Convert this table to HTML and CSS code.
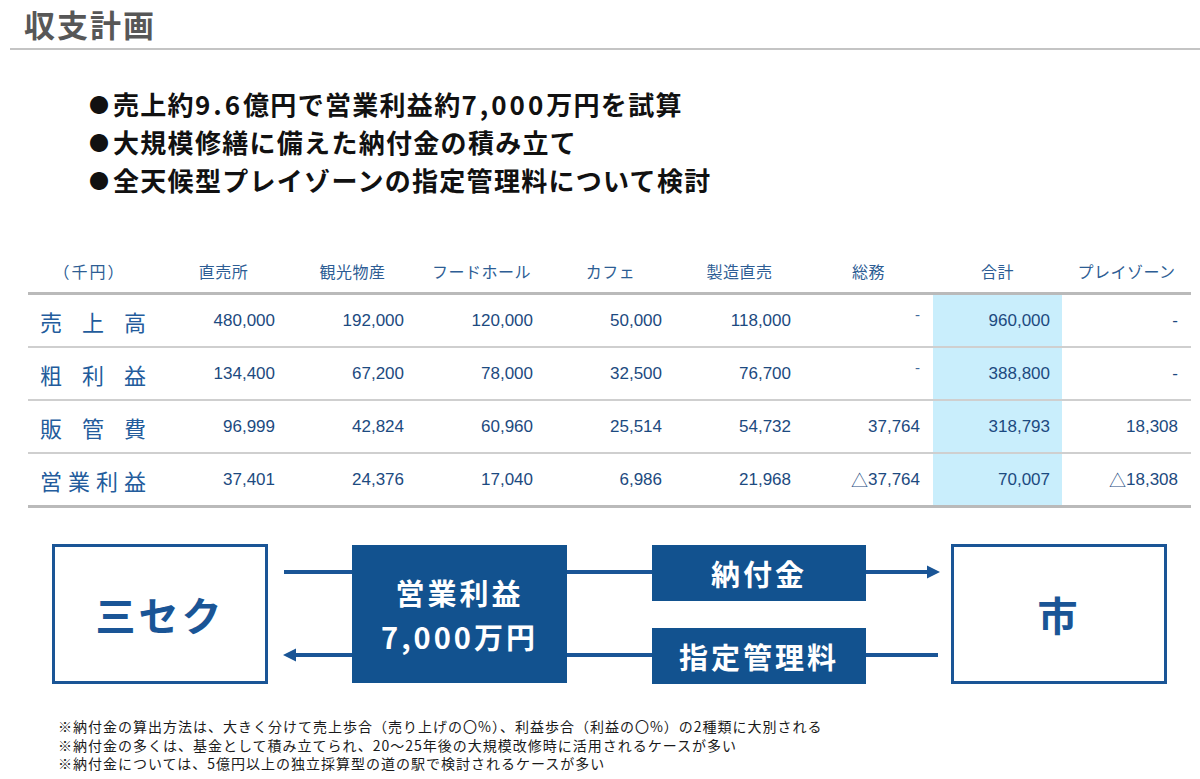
FILE: index.html
```html
<!DOCTYPE html>
<html lang="ja">
<head>
<meta charset="utf-8">
<title>収支計画</title>
<link rel="stylesheet" href="styles.css">
</head>
<body>
<header class="page-head">
  <h1 class="title">収支計画</h1>
</header>

<ul class="points">
  <li><span class="dot">●</span>売上約<span class="num">9.6</span>億円で営業利益約<span class="num">7,000</span>万円を試算</li>
  <li><span class="dot">●</span>大規模修繕に備えた納付金の積み立て</li>
  <li><span class="dot">●</span>全天候型プレイゾーンの指定管理料について検討</li>
</ul>

<div class="fin-table">
  <div class="thead">
    <div class="th th-unit">（千円）</div>
    <div class="th">直売所</div>
    <div class="th">観光物産</div>
    <div class="th">フードホール</div>
    <div class="th">カフェ</div>
    <div class="th">製造直売</div>
    <div class="th">総務</div>
    <div class="th">合計</div>
    <div class="th">プレイゾーン</div>
  </div>

  <div class="tr">
    <div class="td-label"><span class="label"><span>売</span><span>上</span><span>高</span></span></div>
    <div class="td">480,000</div>
    <div class="td">192,000</div>
    <div class="td">120,000</div>
    <div class="td">50,000</div>
    <div class="td">118,000</div>
    <div class="td"><span class="dash-hi">-</span></div>
    <div class="td total">960,000</div>
    <div class="td">-</div>
  </div>

  <div class="tr">
    <div class="td-label"><span class="label"><span>粗</span><span>利</span><span>益</span></span></div>
    <div class="td">134,400</div>
    <div class="td">67,200</div>
    <div class="td">78,000</div>
    <div class="td">32,500</div>
    <div class="td">76,700</div>
    <div class="td"><span class="dash-hi">-</span></div>
    <div class="td total">388,800</div>
    <div class="td">-</div>
  </div>

  <div class="tr">
    <div class="td-label"><span class="label"><span>販</span><span>管</span><span>費</span></span></div>
    <div class="td">96,999</div>
    <div class="td">42,824</div>
    <div class="td">60,960</div>
    <div class="td">25,514</div>
    <div class="td">54,732</div>
    <div class="td">37,764</div>
    <div class="td total">318,793</div>
    <div class="td">18,308</div>
  </div>

  <div class="tr tr-last">
    <div class="td-label"><span class="label"><span>営</span><span>業</span><span>利</span><span>益</span></span></div>
    <div class="td">37,401</div>
    <div class="td">24,376</div>
    <div class="td">17,040</div>
    <div class="td">6,986</div>
    <div class="td">21,968</div>
    <div class="td"><span class="tri">△</span>37,764</div>
    <div class="td total">70,007</div>
    <div class="td"><span class="tri">△</span>18,308</div>
  </div>
</div>

<div class="flow">
  <div class="party">三セク</div>

  <svg class="conn conn-a" width="84" height="140" viewBox="0 0 84 140">
    <line x1="16" y1="28" x2="84" y2="28" />
    <line x1="26" y1="111" x2="84" y2="111" />
    <polygon points="15,111 28,104.5 28,117.5" />
  </svg>

  <div class="profit">
    <span>営業利益</span>
    <span>7,000万円</span>
  </div>

  <svg class="conn conn-b" width="85" height="140" viewBox="0 0 85 140">
    <line x1="0" y1="28" x2="85" y2="28" />
    <line x1="0" y1="111" x2="85" y2="111" />
  </svg>

  <div class="labels">
    <div class="tag">納付金</div>
    <div class="tag">指定管理料</div>
  </div>

  <svg class="conn conn-c" width="85" height="140" viewBox="0 0 85 140">
    <line x1="0" y1="28" x2="63" y2="28" />
    <polygon points="74,28 61,21.5 61,34.5" />
    <line x1="0" y1="111" x2="72" y2="111" />
  </svg>

  <div class="party">市</div>
</div>

<div class="notes">
  <p>※納付金の算出方法は、大きく分けて売上歩合（売り上げの〇%）、利益歩合（利益の〇%）の2種類に大別される</p>
  <p>※納付金の多くは、基金として積み立てられ、20～25年後の大規模改修時に活用されるケースが多い</p>
  <p>※納付金については、5億円以上の独立採算型の道の駅で検討されるケースが多い</p>
</div>
</body>
</html>
```

FILE: styles.css
```css
* {
  box-sizing: border-box;
}

html, body {
  margin: 0;
  padding: 0;
  background: #ffffff;
}

body {
  width: 1200px;
  height: 779px;
  overflow: hidden;
  font-family: "Noto Sans CJK JP", "Noto Sans", sans-serif;
  color: #111111;
}

/* ---------- header ---------- */
.page-head {
  margin-left: 10px;
  height: 50px;
  border-bottom: 2px solid #c4c4c4;
  padding-left: 14px;
}

.title {
  margin: 0;
  font-size: 31px;
  line-height: 48px;
  font-weight: 700;
  letter-spacing: 2px;
  color: #575757;
}

/* ---------- bullet points ---------- */
.points {
  list-style: none;
  margin: 35px 0 0 0;
  padding: 0 0 0 89px;
}

.points li {
  font-size: 26px;
  line-height: 37px;
  font-weight: 700;
  letter-spacing: 1.3px;
  color: #111111;
}

.dot {
  display: inline-block;
  width: 24px;
  font-size: 20px;
  letter-spacing: 0;
  vertical-align: 2px;
}

.num {
  letter-spacing: 3px;
}

/* ---------- table ---------- */
.fin-table {
  margin: 51px 0 0 28px;
  width: 1163px;
}

.thead,
.tr {
  display: grid;
  grid-template-columns: 131px repeat(8, 129px);
}

.thead {
  height: 45px;
  align-items: center;
  border-bottom: 3px solid #bababa;
}

.th {
  text-align: center;
  font-size: 16px;
  font-weight: 400;
  color: #2d5d94;
  letter-spacing: 0.5px;
}

.th-unit {
  padding-right: 8px;
  letter-spacing: 2px;
}

.tr {
  height: 53px;
  border-bottom: 2px solid #cfcfcf;
}

.tr-last {
  height: 54px;
  border-bottom: 3px solid #bababa;
}

.td-label {
  display: flex;
  align-items: center;
  padding-left: 12px;
}

.label {
  display: flex;
  justify-content: space-between;
  width: 106px;
  font-size: 22px;
  font-weight: 400;
  color: #235c9c;
}

.td {
  display: flex;
  align-items: center;
  justify-content: flex-end;
  padding-right: 13px;
  font-family: "Liberation Sans", Arial, sans-serif;
  font-size: 17px;
  color: #1c4a80;
}

.td.total {
  background: #c9eefc;
  padding-right: 12px;
}

.dash-hi {
  margin-bottom: 12px;
  font-size: 15px;
  color: #3f6a9c;
}

.tri {
  font-family: "Noto Sans CJK JP", sans-serif;
  font-size: 17px;
  font-weight: 300;
}

/* ---------- flow diagram ---------- */
.flow {
  display: flex;
  margin: 36px 0 0 52px;
  height: 140px;
}

.party {
  width: 216px;
  height: 140px;
  border: 3px solid #1a5596;
  display: flex;
  align-items: center;
  justify-content: center;
  font-size: 40px;
  font-weight: 700;
  letter-spacing: 3px;
  color: #1a5596;
}

.conn {
  display: block;
  flex: none;
}

.conn line {
  stroke: #1a5596;
  stroke-width: 4;
}

.conn polygon {
  fill: #1a5596;
}

.profit {
  width: 215px;
  height: 138px;
  margin-top: 1px;
  background: #12528f;
  display: flex;
  flex-direction: column;
  align-items: center;
  justify-content: center;
  color: #ffffff;
  font-size: 29px;
  line-height: 44px;
  font-weight: 700;
  letter-spacing: 3px;
}

.labels {
  width: 214px;
  padding-top: 1px;
  display: flex;
  flex-direction: column;
  justify-content: space-between;
}

.tag {
  height: 56px;
  background: #12528f;
  display: flex;
  align-items: center;
  justify-content: center;
  color: #ffffff;
  font-size: 29px;
  font-weight: 700;
  letter-spacing: 3px;
}

/* ---------- footnotes ---------- */
.notes {
  margin: 33px 0 0 58px;
}

.notes p {
  margin: 0;
  font-size: 14px;
  line-height: 18.6px;
  color: #1a1a1a;
  letter-spacing: 1px;
}
```
